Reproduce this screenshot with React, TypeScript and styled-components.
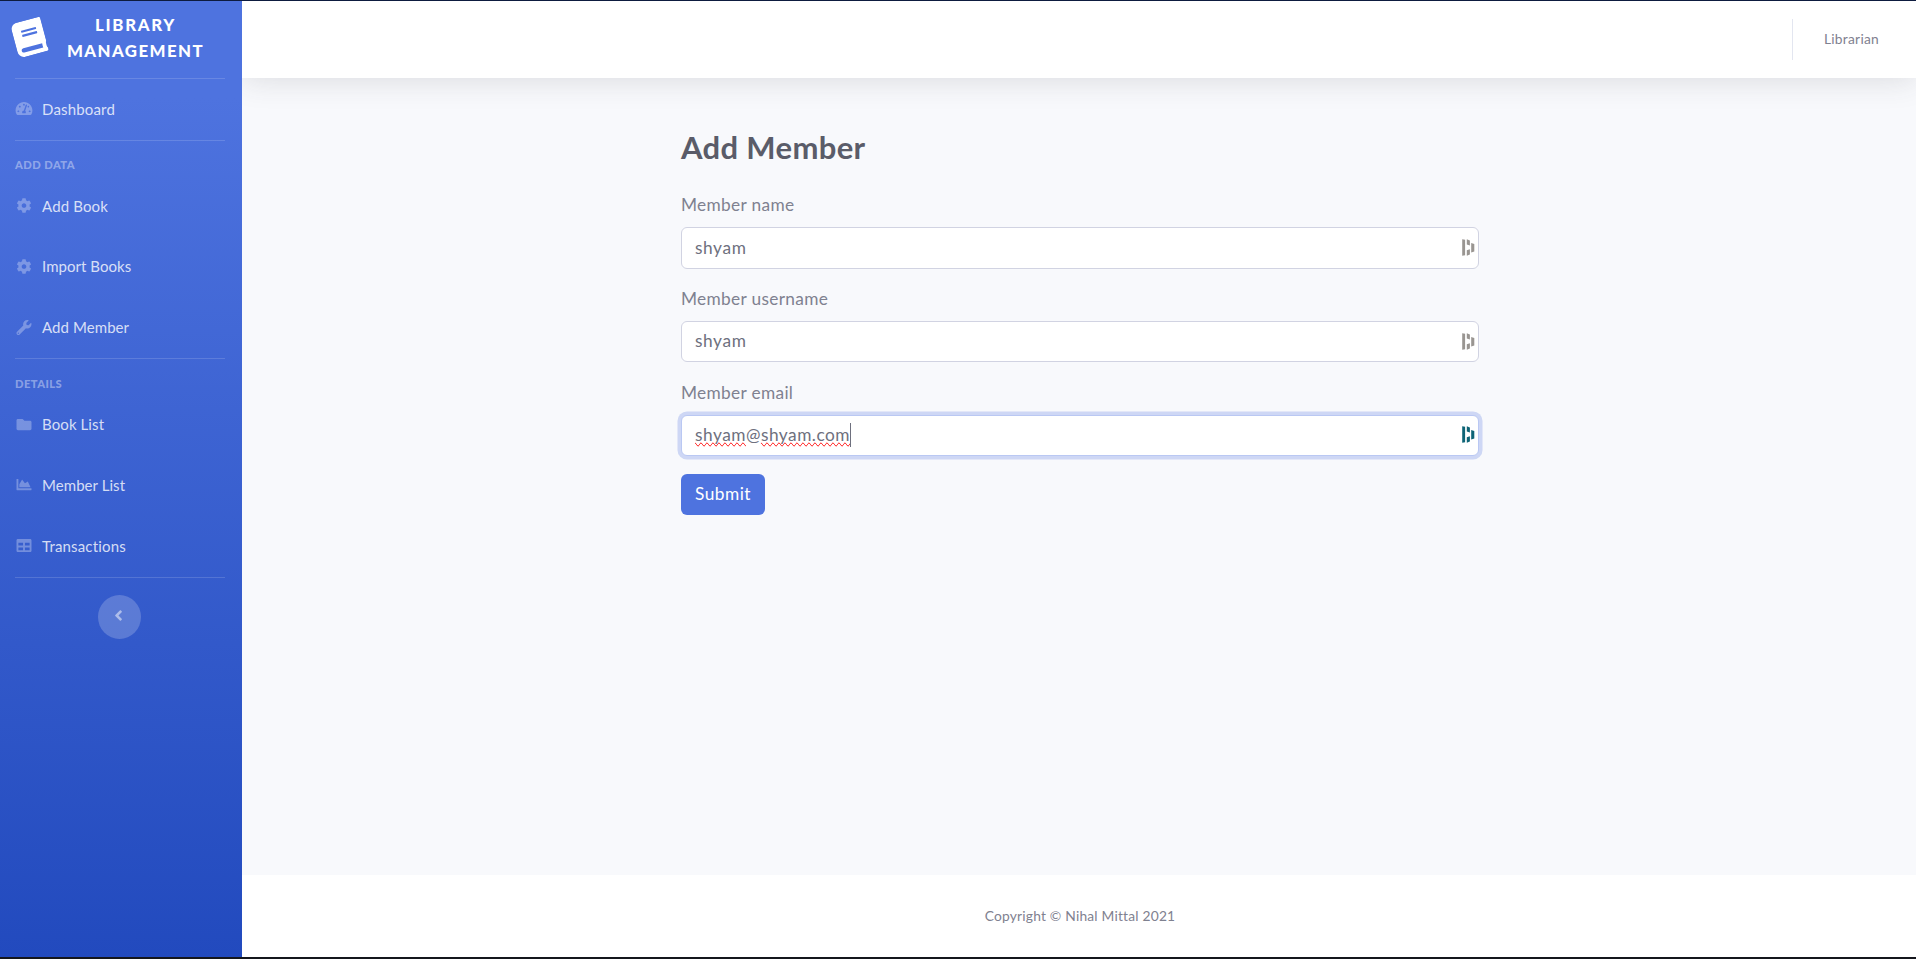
import React from 'react';
import styled, { createGlobalStyle, css } from 'styled-components';
import {
  FaAngleLeft,
  FaBook,
  FaChartArea,
  FaCog,
  FaFolder,
  FaTable,
  FaTachometerAlt,
  FaWrench,
} from 'react-icons/fa';

const GlobalStyle = createGlobalStyle`
  *, *::before, *::after { box-sizing: border-box; }
  body {
    margin: 0;
    font-family: Lato, "Open Sans", sans-serif;
    font-size: 17.3px;
    line-height: 26px;
    color: #7f8190;
    background: #f8f9fc;
    overflow: hidden;
  }
`;

const Page = styled.div`
  display: flex;
  height: 959px;
  border-top: 1px solid #0d1b3f;
  border-bottom: 2px solid #14161c;
`;

const Sidebar = styled.nav`
  width: 242px;
  flex: none;
  display: flex;
  flex-direction: column;
  background: linear-gradient(180deg, #4e73df 10%, #224abe 100%);
`;

const Brand = styled.a`
  display: flex;
  align-items: center;
  height: 77px;
  padding: 0 23px 3px 15px;
  color: #fff;
  font-weight: 900;
  font-size: 16.8px;
  text-transform: uppercase;
  text-align: center;
  svg {
    flex: none;
    width: 31px;
    height: 35px;
    margin: 0 1px 1px -1px;
    transform: rotate(-15deg);
  }
`;

const BrandText = styled.div`
  flex: 1;
  margin-left: 6px;
`;

const BrandLine = styled.div<{ $track: number }>`
  letter-spacing: ${(p) => p.$track}px;
`;

const Divider = styled.hr`
  width: 210px;
  height: 1px;
  flex: none;
  margin: 0 0 0 15px;
  border: 0;
  background: rgba(255, 255, 255, 0.15);
`;

const SectionTitle = styled.div`
  height: 35px;
  padding: 16.5px 15px 0;
  font-size: 11.2px;
  line-height: 15px;
  font-weight: 900;
  text-transform: uppercase;
  color: rgba(255, 255, 255, 0.4);
  letter-spacing: 0.42px;
`;

const NavItem = styled.a<{ $track: number }>`
  display: flex;
  align-items: center;
  height: 60.8px;
  padding: 0 15px 1px;
  color: rgba(255, 255, 255, 0.8);
  font-size: 15px;
  letter-spacing: ${(p) => p.$track}px;
  svg {
    width: 18px;
    height: 15px;
    margin-right: 9px;
    color: rgba(255, 255, 255, 0.3);
  }
`;

const Toggle = styled.button`
  display: flex;
  align-items: center;
  justify-content: center;
  align-self: center;
  width: 43px;
  height: 44px;
  margin: 17px 3px 0 0;
  padding: 0 2px 3px 0;
  border: 0;
  border-radius: 50%;
  background: rgba(255, 255, 255, 0.2);
  color: rgba(255, 255, 255, 0.5);
  svg { width: 17px; height: 17px; }
`;

const Content = styled.div`
  flex: 1;
  display: flex;
  flex-direction: column;
`;

const Topbar = styled.header`
  display: flex;
  align-items: center;
  justify-content: flex-end;
  height: 77px;
  flex: none;
  padding-right: 37px;
  background: #fff;
  box-shadow: 0 2.6px 30px rgba(58, 59, 69, 0.15);
  clip-path: inset(0 0 -60px 0);
`;

const UserName = styled.div`
  display: flex;
  align-items: center;
  height: 41px;
  padding: 0 0 2px 31px;
  border-left: 1px solid #e3e6f0;
  font-size: 13.8px;
  letter-spacing: 0.25px;
`;

const Main = styled.main`
  flex: 1;
  display: flex;
  justify-content: center;
  padding: 50px 0 0 2px;
`;

const Form = styled.form`
  width: 798px;
`;

const Title = styled.h1`
  margin: 0;
  height: 62px;
  font-size: 31px;
  line-height: 39px;
  font-weight: 700;
  letter-spacing: 0.35px;
  color: #5a5c69;
`;

const Field = styled.div`
  height: 94px;
`;

const Label = styled.label`
  display: block;
  height: 37px;
  padding-top: 1.5px;
  letter-spacing: 0.32px;
`;

const Input = styled.div<{ $focused?: boolean; $height?: number }>`
  display: flex;
  align-items: center;
  height: ${(p) => p.$height ?? 41}px;
  padding: 0 3px 1px 13px;
  border: 1px solid #d1d3e2;
  border-radius: 6px;
  background: #fff;
  color: #6e707e;
  ${(p) =>
    p.$focused &&
    css`
      padding-bottom: 2px;
      border-color: #bac8f3;
      box-shadow: 0 0 0 3.5px rgba(78, 115, 223, 0.25);
    `}
  svg { margin-left: auto; }
`;

const Value = styled.span<{ $track: number }>`
  letter-spacing: ${(p) => p.$track}px;
`;

const Misspelled = styled.span`
  text-decoration-line: spelling-error;
`;

const Caret = styled.span`
  width: 1px;
  height: 24px;
  background: #6e707e;
`;

const Submit = styled.button`
  display: block;
  width: 84px;
  height: 41px;
  margin-top: 2px;
  padding: 0 0 2px;
  border: 0;
  border-radius: 6px;
  background: #4e73df;
  color: #fff;
  font: inherit;
  letter-spacing: 0.5px;
`;

const Footer = styled.footer`
  display: flex;
  align-items: center;
  justify-content: center;
  height: 82px;
  flex: none;
  padding-left: 2px;
  background: #fff;
  font-size: 13.8px;
  letter-spacing: 0.2px;
`;

const FillIcon = ({ color }: { color: string }) => (
  <svg width="13" height="17" viewBox="0 0 13 17" fill={color}>
    <path d="M0.2 0.3L3.1 0.8V16.2L0.2 16.7Z" />
    <path d="M4.8 0.3L7.9 1.4V6.4L4.8 5.5Z" />
    <path d="M4.8 11.2L7.9 10.2V15.4L4.8 16.7Z" />
    <path d="M9.2 3.9L12.3 5V12.4L9.2 13.6Z" />
  </svg>
);

export default function App() {
  return (
    <>
      <GlobalStyle />
      <Page>
        <Sidebar>
          <Brand>
            <FaBook />
            <BrandText>
              <BrandLine $track={1.7}>Library</BrandLine>
              <BrandLine $track={1.45}>Management</BrandLine>
            </BrandText>
          </Brand>
          <Divider />
          <NavItem $track={0.17}><FaTachometerAlt />Dashboard</NavItem>
          <Divider />
          <SectionTitle>Add Data</SectionTitle>
          <NavItem $track={0.15}><FaCog />Add Book</NavItem>
          <NavItem $track={0.05}><FaCog />Import Books</NavItem>
          <NavItem $track={0.08}><FaWrench />Add Member</NavItem>
          <Divider />
          <SectionTitle>Details</SectionTitle>
          <NavItem $track={0.1}><FaFolder />Book List</NavItem>
          <NavItem $track={0.06}><FaChartArea />Member List</NavItem>
          <NavItem $track={0.17}><FaTable />Transactions</NavItem>
          <Divider />
          <Toggle type="button"><FaAngleLeft /></Toggle>
        </Sidebar>
        <Content>
          <Topbar>
            <UserName>Librarian</UserName>
          </Topbar>
          <Main>
            <Form>
              <Title>Add Member</Title>
              <Field>
                <Label>Member name</Label>
                <Input $height={42}><Value $track={0.6}>shyam</Value><FillIcon color="#999591" /></Input>
              </Field>
              <Field>
                <Label>Member username</Label>
                <Input><Value $track={0.6}>shyam</Value><FillIcon color="#999591" /></Input>
              </Field>
              <Field>
                <Label>Member email</Label>
                <Input $focused>
                  <Value $track={0.5}>
                    <Misspelled>shyam</Misspelled>@<Misspelled>shyam.com</Misspelled>
                  </Value>
                  <Caret />
                  <FillIcon color="#0e6476" />
                </Input>
              </Field>
              <Submit type="button">Submit</Submit>
            </Form>
          </Main>
          <Footer>Copyright © Nihal Mittal 2021</Footer>
        </Content>
      </Page>
    </>
  );
}
